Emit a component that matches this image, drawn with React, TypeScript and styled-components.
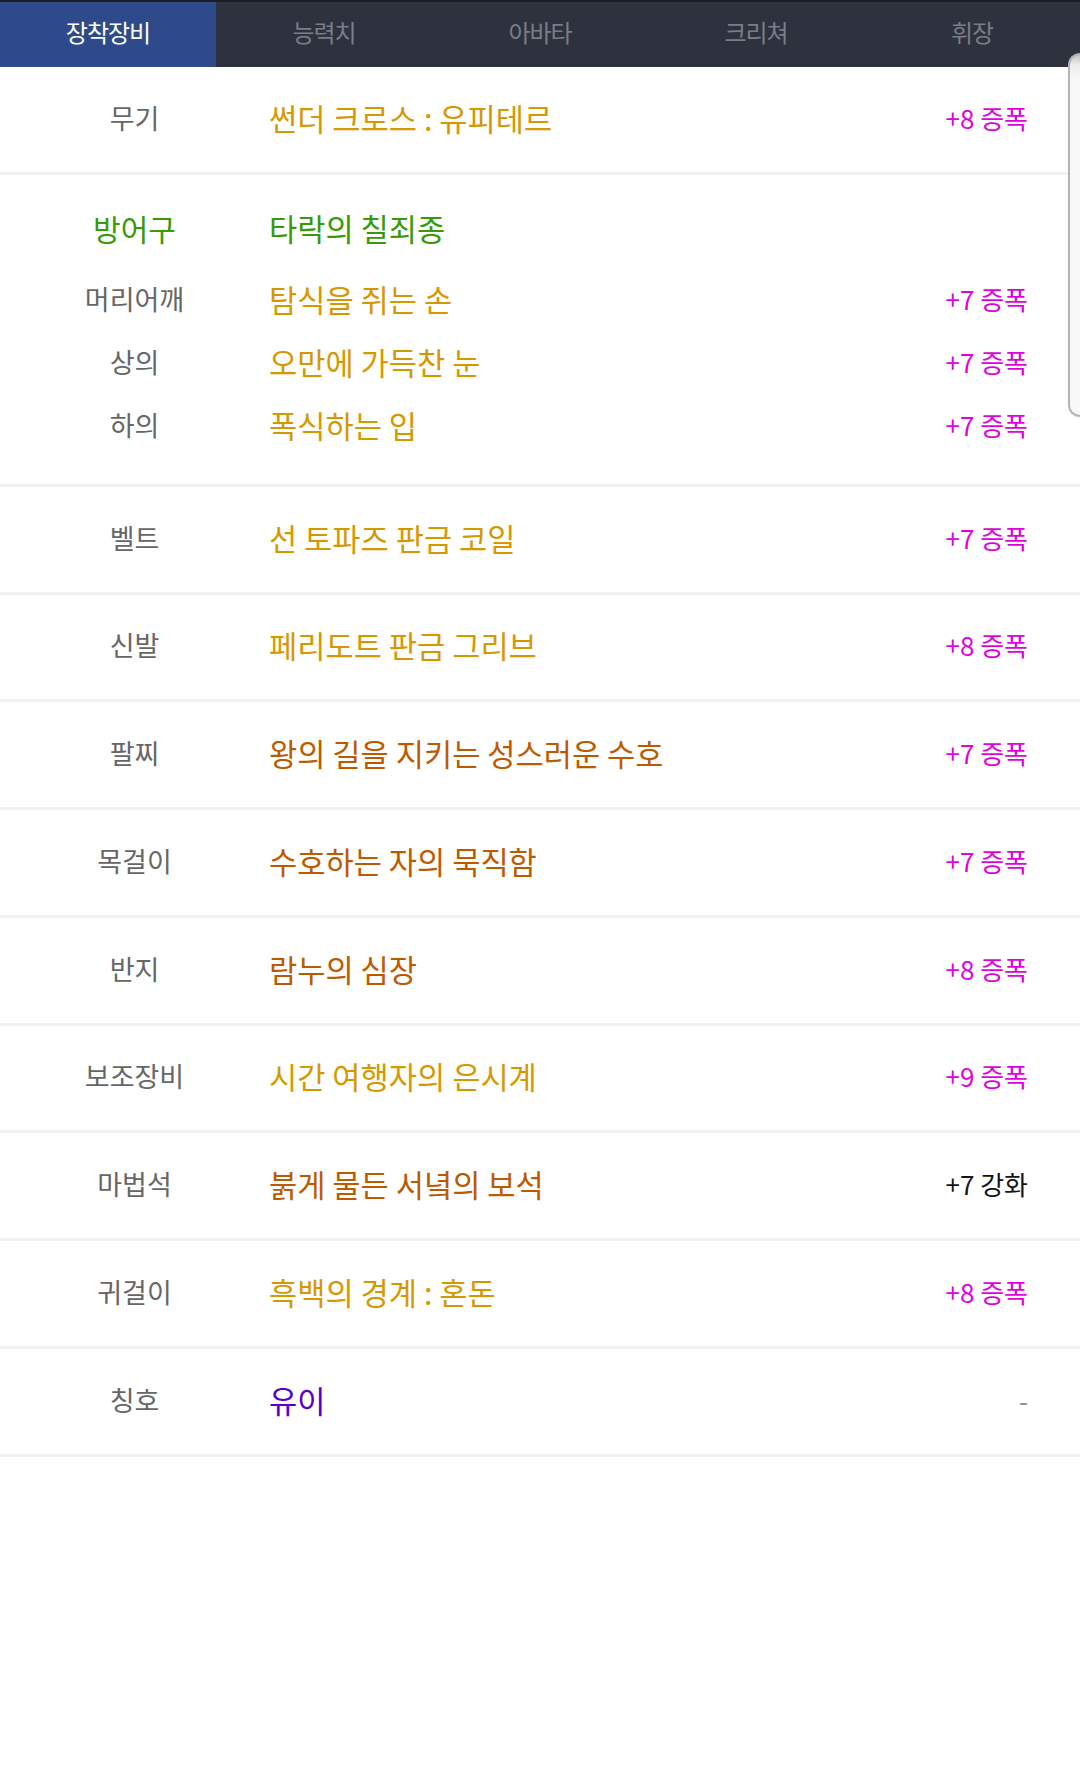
import styled, { createGlobalStyle } from "styled-components";

type Tone = "unique" | "legend" | "set" | "title" | "plain";
type ValueTone = "amp" | "enhance" | "none";

interface Item {
  label: string;
  name: string;
  tone: Tone;
  value: string;
  valueTone: ValueTone;
}

const TABS = ["장착장비", "능력치", "아바타", "크리쳐", "휘장"];

const ARMOR: Item[] = [
  { label: "머리어깨", name: "탐식을 쥐는 손", tone: "unique", value: "+7 증폭", valueTone: "amp" },
  { label: "상의", name: "오만에 가득찬 눈", tone: "unique", value: "+7 증폭", valueTone: "amp" },
  { label: "하의", name: "폭식하는 입", tone: "unique", value: "+7 증폭", valueTone: "amp" },
];

const WEAPON: Item = {
  label: "무기",
  name: "썬더 크로스 : 유피테르",
  tone: "unique",
  value: "+8 증폭",
  valueTone: "amp",
};

const REST: Item[] = [
  { label: "벨트", name: "선 토파즈 판금 코일", tone: "unique", value: "+7 증폭", valueTone: "amp" },
  { label: "신발", name: "페리도트 판금 그리브", tone: "unique", value: "+8 증폭", valueTone: "amp" },
  { label: "팔찌", name: "왕의 길을 지키는 성스러운 수호", tone: "legend", value: "+7 증폭", valueTone: "amp" },
  { label: "목걸이", name: "수호하는 자의 묵직함", tone: "legend", value: "+7 증폭", valueTone: "amp" },
  { label: "반지", name: "람누의 심장", tone: "legend", value: "+8 증폭", valueTone: "amp" },
  { label: "보조장비", name: "시간 여행자의 은시계", tone: "unique", value: "+9 증폭", valueTone: "amp" },
  { label: "마법석", name: "붉게 물든 서녘의 보석", tone: "legend", value: "+7 강화", valueTone: "enhance" },
  { label: "귀걸이", name: "흑백의 경계 : 혼돈", tone: "unique", value: "+8 증폭", valueTone: "amp" },
  { label: "칭호", name: "유이", tone: "title", value: "-", valueTone: "none" },
];

const toneColor: Record<Tone, string> = {
  unique: "#d69800",
  legend: "#bd5a00",
  set: "#379a06",
  title: "#5a00c8",
  plain: "#666666",
};

const valueColor: Record<ValueTone, string> = {
  amp: "#e000e0",
  enhance: "#141414",
  none: "#8a8a8a",
};

export default function App() {
  return (
    <>
      <GlobalStyle />
      <Page>
        <TabBar>
          {TABS.map((t, i) => (
            <Tab key={t} $active={i === 0}>
              {t}
            </Tab>
          ))}
        </TabBar>

        <List>
          <ItemRow item={WEAPON} />

          <ArmorGroup>
            <SubRow $header>
              <Label $tone="set">방어구</Label>
              <ItemName $tone="set">타락의 칠죄종</ItemName>
              <span />
            </SubRow>
            {ARMOR.map((a) => (
              <SubRow key={a.label}>
                <Label>{a.label}</Label>
                <ItemName $tone={a.tone}>{a.name}</ItemName>
                <Value $tone={a.valueTone}>{a.value}</Value>
              </SubRow>
            ))}
          </ArmorGroup>

          {REST.map((item) => (
            <ItemRow key={item.label} item={item} />
          ))}
        </List>

        <EdgePanel />
      </Page>
    </>
  );
}

function ItemRow({ item }: { item: Item }) {
  return (
    <Row>
      <Label>{item.label}</Label>
      <ItemName $tone={item.tone}>{item.name}</ItemName>
      <Value $tone={item.valueTone}>{item.value}</Value>
    </Row>
  );
}

const GlobalStyle = createGlobalStyle`
  html, body {
    margin: 0;
    padding: 0;
    background: #ffffff;
  }
  body {
    font-family: "Noto Sans CJK KR", "Noto Sans", sans-serif;
  }
  * {
    box-sizing: border-box;
  }
`;

const Page = styled.div`
  position: relative;
  width: 1080px;
  min-height: 1783px;
  background: #ffffff;
  overflow: hidden;
`;

const TabBar = styled.nav`
  display: grid;
  grid-template-columns: repeat(5, 1fr);
  height: 67px;
  background: #2d323e;
  border-top: 2px solid #1c1e24;
`;

const Tab = styled.div<{ $active?: boolean }>`
  display: flex;
  align-items: center;
  justify-content: center;
  background: ${(p) => (p.$active ? "#2e4a8b" : "transparent")};
  color: ${(p) => (p.$active ? "#ffffff" : "#7a7e86")};
  font-size: 24px;
  letter-spacing: -1px;
  padding-bottom: 6px;
`;

const List = styled.div`
  display: flex;
  flex-direction: column;
`;

const rowGrid = `
  display: grid;
  grid-template-columns: 269px 1fr auto;
  align-items: center;
  padding-right: 52px;
`;

const Row = styled.div`
  ${rowGrid}
  min-height: 107.75px;
  padding-bottom: 4px;
  border-bottom: 3px solid #f1f1f1;
`;

const ArmorGroup = styled.div`
  display: flex;
  flex-direction: column;
  padding: 21.5px 0 27.5px;
  border-bottom: 3px solid #f1f1f1;
`;

const SubRow = styled.div<{ $header?: boolean }>`
  ${rowGrid}
  height: 63px;
  margin-bottom: ${(p) => (p.$header ? "8px" : "0")};
`;

const Label = styled.span<{ $tone?: Tone }>`
  text-align: center;
  font-size: ${(p) => (p.$tone ? "30px" : "27px")};
  color: ${(p) => (p.$tone ? toneColor[p.$tone] : "#666666")};
  white-space: nowrap;
`;

const ItemName = styled.span<{ $tone: Tone }>`
  font-size: 30.7px;
  color: ${(p) => toneColor[p.$tone]};
  white-space: nowrap;
`;

const Value = styled.span<{ $tone: ValueTone }>`
  font-size: 26px;
  color: ${(p) => valueColor[p.$tone]};
  text-align: right;
  white-space: nowrap;
`;

const EdgePanel = styled.div`
  position: absolute;
  top: 53px;
  right: 0;
  width: 12px;
  height: 364px;
  background: linear-gradient(#c4c4c4 0, #ececec 10px, #f8f8f8 24px);
  border: 2px solid #b4b4b4;
  border-right: none;
  border-radius: 14px 0 0 14px;
`;
